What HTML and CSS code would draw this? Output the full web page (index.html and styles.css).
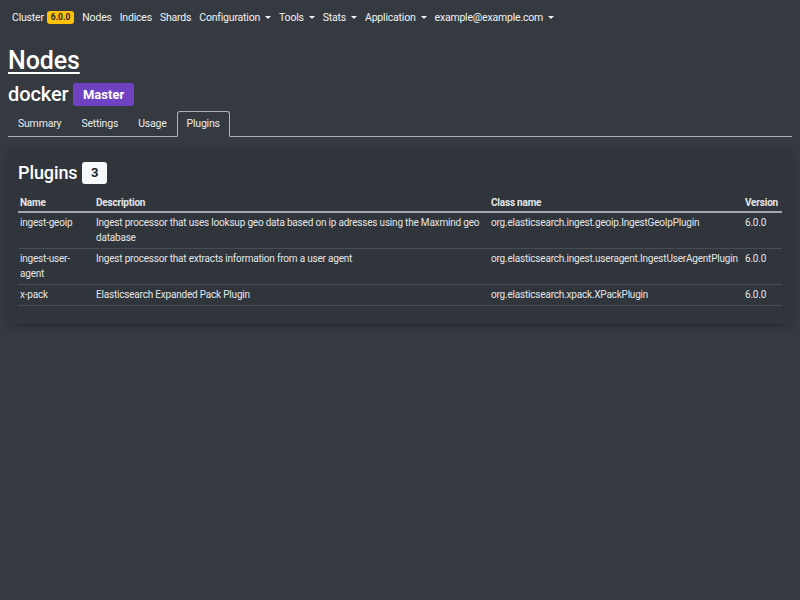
FILE: index.html
```html
<!DOCTYPE html>
<html lang="en">
<head>
<meta charset="utf-8">
<title>Nodes - docker</title>
<link rel="stylesheet" href="styles.css">
</head>
<body>
<nav class="navbar">
  <a class="nav-link" href="#">Cluster <span class="badge badge-warning">6.0.0</span></a>
  <a class="nav-link" href="#">Nodes</a>
  <a class="nav-link" href="#">Indices</a>
  <a class="nav-link" href="#">Shards</a>
  <a class="nav-link dropdown" href="#">Configuration</a>
  <a class="nav-link dropdown" href="#">Tools</a>
  <a class="nav-link dropdown" href="#">Stats</a>
  <a class="nav-link dropdown" href="#">Application</a>
  <a class="nav-link dropdown" href="#">example@example.com</a>
</nav>
<main class="container">
  <h1 class="title"><a href="#">Nodes</a></h1>
  <h2 class="subtitle">docker <span class="badge badge-master">Master</span></h2>
  <ul class="tabs">
    <li><a class="tab" href="#">Summary</a></li>
    <li><a class="tab" href="#">Settings</a></li>
    <li><a class="tab" href="#">Usage</a></li>
    <li><a class="tab active" href="#">Plugins</a></li>
  </ul>
  <section class="card">
    <h3 class="card-title">Plugins <span class="badge badge-light">3</span></h3>
    <table class="table">
      <colgroup>
        <col class="col-name"><col class="col-desc"><col class="col-class"><col class="col-ver">
      </colgroup>
      <thead>
        <tr><th>Name</th><th>Description</th><th>Class name</th><th>Version</th></tr>
      </thead>
      <tbody>
        <tr><td>ingest-geoip</td><td>Ingest processor that uses looksup geo data based on ip adresses using the Maxmind geo database</td><td>org.elasticsearch.ingest.geoip.IngestGeoIpPlugin</td><td>6.0.0</td></tr>
        <tr><td>ingest-user-agent</td><td>Ingest processor that extracts information from a user agent</td><td>org.elasticsearch.ingest.useragent.IngestUserAgentPlugin</td><td>6.0.0</td></tr>
        <tr><td>x-pack</td><td>Elasticsearch Expanded Pack Plugin</td><td>org.elasticsearch.xpack.XPackPlugin</td><td>6.0.0</td></tr>
      </tbody>
    </table>
  </section>
</main>
</body>
</html>
```
FILE: styles.css
```css
* { box-sizing: border-box; }
html, body { margin: 0; padding: 0; }
body {
  background: #343a40;
  color: #fff;
  font-family: "Roboto", "Liberation Sans", sans-serif;
  font-size: 10px;
  line-height: 1.5;
  letter-spacing: -0.2px;
  min-height: 600px;
}
a { color: inherit; text-decoration: none; }

.navbar {
  display: flex;
  align-items: center;
  padding: 0 8px;
  height: 35px;
}
.nav-link {
  display: flex;
  align-items: center;
  padding: 0 4px;
  font-size: 10.5px;
  color: #f2f3f4;
  white-space: nowrap;
}
.dropdown::after {
  content: "";
  display: inline-block;
  margin-left: 5px;
  border-top: 3.5px solid #f2f3f4;
  border-left: 3px solid transparent;
  border-right: 3px solid transparent;
  vertical-align: middle;
}
.badge {
  display: inline-block;
  font-weight: 700;
  border-radius: 3px;
  line-height: 1;
  white-space: nowrap;
  letter-spacing: 0;
}
.badge-warning {
  background: #ffc107;
  color: #212529;
  font-size: 8.5px;
  padding: 2.5px 4px;
  margin-left: 3px;
}
.container { padding: 0 8px; }
.title {
  margin: 11px 0 0 0;
  font-size: 25px;
  font-weight: 500;
  line-height: 1.2;
  letter-spacing: -0.1px;
}
.title a { text-decoration: underline; text-decoration-thickness: 2px; text-underline-offset: 3px; }
.subtitle {
  margin: 6px 0 0 0;
  display: flex;
  align-items: center;
  font-size: 20px;
  font-weight: 500;
  line-height: 1.2;
  letter-spacing: -0.1px;
}
.badge-master {
  background: #6f42c1;
  color: #fff;
  font-size: 13px;
  padding: 5px 9.5px;
  margin-left: 5px;
}
.tabs {
  display: flex;
  list-style: none;
  margin: 5px 0 0 0;
  padding: 0;
  border-bottom: 1px solid #aeb2b6;
}
.tab {
  display: block;
  padding: 4px 9px;
  margin-bottom: -1px;
  border: 1px solid transparent;
  border-radius: 3px 3px 0 0;
  color: #e9ecef;
  font-size: 10.5px;
  line-height: 1.5;
}
.tab.active {
  border-color: #aeb2b6 #aeb2b6 #343a40;
  background: #343a40;
}
.card {
  margin-top: 12px;
  background: #30353b;
  border-radius: 4px;
  box-shadow: 0 2px 6px rgba(0,0,0,0.25);
  padding: 13px 10px 18px 10px;
}
.card-title {
  margin: 0 0 9px 0;
  display: flex;
  align-items: center;
  font-size: 18px;
  font-weight: 500;
  line-height: 1.2;
  letter-spacing: -0.1px;
}
.badge-light {
  background: #f8f9fa;
  color: #212529;
  font-size: 13px;
  padding: 4.5px 8.5px;
  margin-left: 5px;
}
.table {
  width: 100%;
  border-collapse: collapse;
  table-layout: fixed;
  color: #e4e6e8;
}
.table th, .table td {
  text-align: left;
  vertical-align: top;
  line-height: 15px;
}
.table th {
  font-weight: 700;
  padding: 2px 2px 1px;
  border-bottom: 2px solid #a3a7ab;
}
.table td {
  padding: 2px 2px 3px;
  border-bottom: 1px solid #474d54;
}
.col-name { width: 76px; }
.col-desc { width: 395px; }
.col-class { width: 254px; }
```
